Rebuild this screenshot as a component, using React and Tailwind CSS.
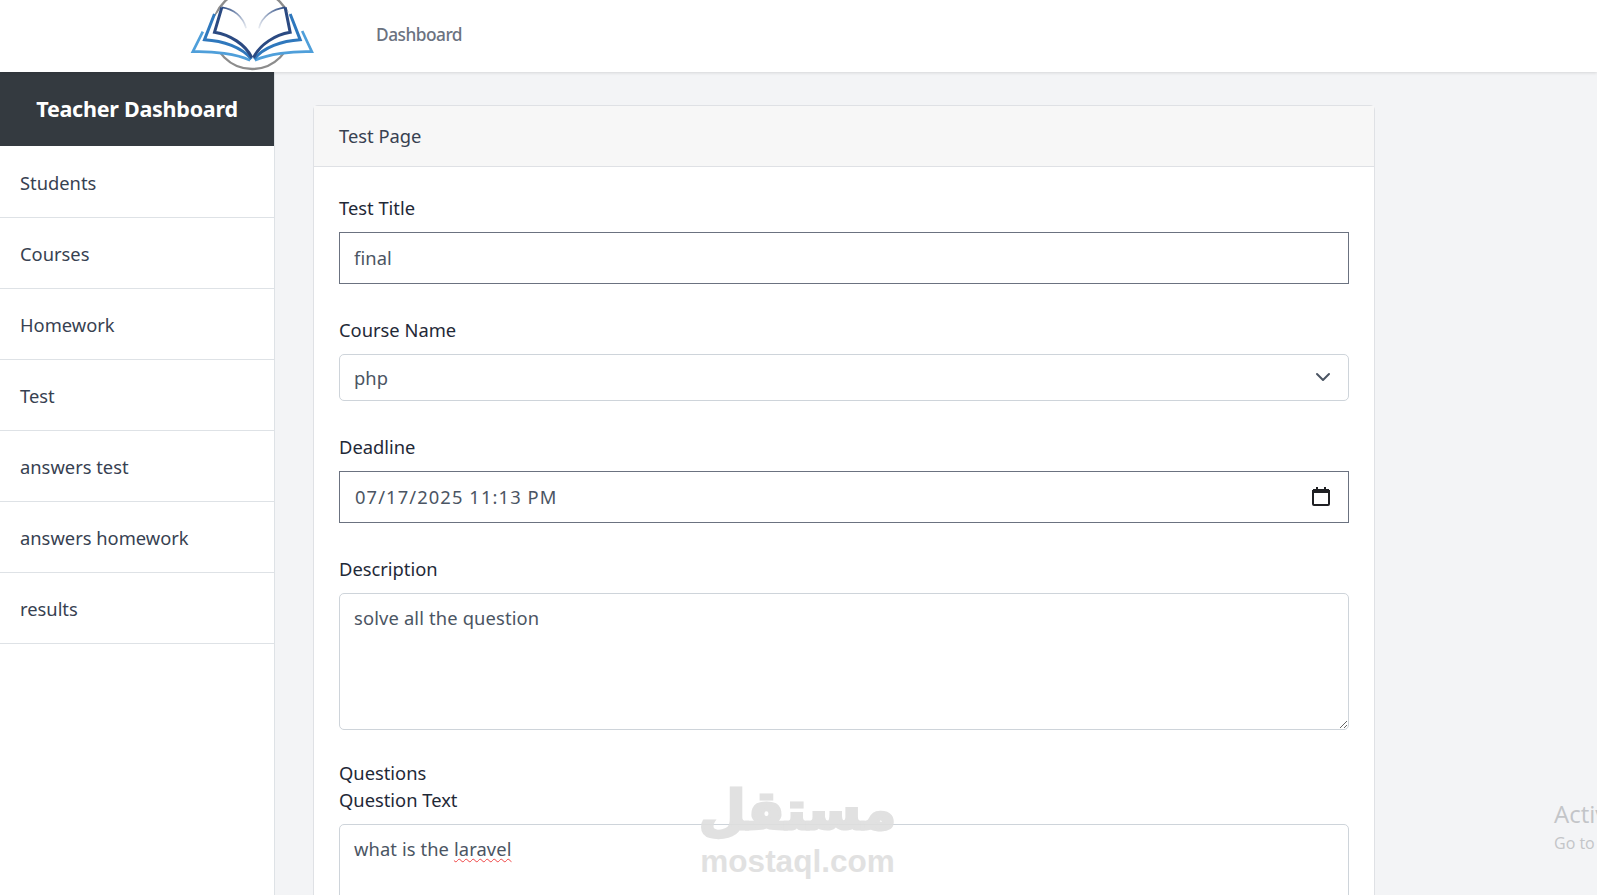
const items = ["Students", "Courses", "Homework", "Test", "answers test", "answers homework", "results"];

function Logo() {
  return (
    <svg viewBox="60 0 380 216" className="w-[127px] h-[72px] shrink-0 ml-[190px]" fill="none">
      <defs>
        <linearGradient id="fadeL" x1="155" y1="25" x2="228" y2="88" gradientUnits="userSpaceOnUse">
          <stop offset="0" stopColor="#2b4a82" />
          <stop offset="1" stopColor="#2b4a82" stopOpacity="0.1" />
        </linearGradient>
        <linearGradient id="fadeR" x1="345" y1="25" x2="266" y2="88" gradientUnits="userSpaceOnUse">
          <stop offset="0" stopColor="#2b4a82" />
          <stop offset="1" stopColor="#2b4a82" stopOpacity="0.1" />
        </linearGradient>
      </defs>
      <circle cx="246" cy="92" r="118" stroke="#8c8c8c" strokeWidth="7" />
      <path d="M98 98 L68 158 C130 160 200 165 240 186 L256 186 C300 165 370 160 426 158 L396 98 L345 25 C308 30 275 52 247 100 C218 52 190 30 155 25 Z" fill="#fff" />
      <path d="M98 98 L68 158 C130 156 200 165 240 184" stroke="#4f9fda" strokeWidth="8" />
      <path d="M396 96 L425 158 C365 156 295 165 254 184" stroke="#4f9fda" strokeWidth="8" />
      <path d="M133 45 L103 122 C160 125 215 145 244 180" stroke="#2f78bd" strokeWidth="9" />
      <path d="M360 45 L390 122 C335 125 280 145 252 180" stroke="#2f78bd" strokeWidth="9" />
      <path d="M155 25 L133 100 C180 108 225 135 245 176" stroke="#2b4a82" strokeWidth="9" />
      <path d="M345 25 L360 100 C315 108 270 135 250 176" stroke="#2b4a82" strokeWidth="9" />
      <path d="M155 25 C190 30 218 52 228 88" stroke="url(#fadeL)" strokeWidth="5" />
      <path d="M345 25 C308 30 275 52 266 88" stroke="url(#fadeR)" strokeWidth="5" />
    </svg>
  );
}

function Label({ children, className = "" }) {
  return <div className={"text-[#1f2937] leading-[27.5px] " + className}>{children}</div>;
}

export default function App() {
  return (
    <div className="relative h-[895px] w-[1597px] overflow-hidden bg-[#f3f4f6] text-[18.33px] text-[#374151] font-['Noto_Sans','Open_Sans',sans-serif]">
      <header className="relative z-10 flex h-[72px] items-center bg-white pb-[3px] shadow-[0_1px_3px_rgba(0,0,0,0.12)]">
        <Logo />
        <span className="ml-[59px] text-[17.3px] font-medium tracking-[-0.5px] text-[#6b7280]">Dashboard</span>
      </header>
      <div className="flex h-[823px]">
        <aside className="w-[275px] shrink-0 border-r border-[#dee2e6] bg-white">
          <div className="flex h-[74px] items-center justify-center bg-[#343a40] text-[21.5px] font-bold tracking-[-0.25px] text-white">
            Teacher Dashboard
          </div>
          <ul className="pt-px">
            {items.map((t) => (
              <li key={t} className="flex h-[71px] items-center border-b border-[#dee2e6] pl-5 pt-[2px] text-[#374151]">
                {t}
              </li>
            ))}
          </ul>
        </aside>
        <main className="min-w-0 flex-1 pl-[38px] pt-[33px]">
          <section className="w-[1062px] rounded-t-[5px] border border-b-0 border-[#dfe1e5] bg-white pb-10">
            <div className="flex h-[61px] items-center border-b border-[#dfe1e5] bg-[#f7f7f7] pl-[25px]">Test Page</div>
            <form className="px-[25px] pt-[27px]">
              <Label className="mb-[10px]">Test Title</Label>
              <input
                readOnly
                value="final"
                className="mb-[32px] block h-[52px] w-full border border-[#6b7280] bg-white px-[14px] tracking-[0.1px] text-[#4b5563] outline-none"
              />
              <Label className="mb-[11px]">Course Name</Label>
              <div className="relative mb-[32px]">
                <select className="block h-[47px] w-full appearance-none rounded-[5px] border border-[#ced4da] bg-white px-[14px] tracking-[0.1px] text-[#4b5563] outline-none">
                  <option>php</option>
                </select>
                <svg className="pointer-events-none absolute right-[18px] top-[16px] h-[14px] w-[16px]" viewBox="0 0 16 14" fill="none">
                  <path d="M2 4 L8 10 L14 4" stroke="#4b5563" strokeWidth="2" strokeLinecap="round" strokeLinejoin="round" />
                </svg>
              </div>
              <Label className="mb-[10px]">Deadline</Label>
              <div className="relative mb-[32px]">
                <input
                  readOnly
                  value="07/17/2025 11:13 PM"
                  className="block h-[52px] w-full border border-[#6b7280] bg-white px-[15px] tracking-[1.1px] text-[#4b5563] outline-none"
                />
                <svg className="pointer-events-none absolute right-[19px] top-[15px] h-[20px] w-[18px]" viewBox="0 0 18 20" fill="none">
                  <path d="M1 5 H17 V18 a1 1 0 0 1 -1 1 H2 a1 1 0 0 1 -1 -1 Z" stroke="#1f2023" strokeWidth="2" />
                  <path d="M1 3 H17 V7 H1 Z" fill="#1f2023" />
                  <path d="M5 1 V4 M13 1 V4" stroke="#1f2023" strokeWidth="2" />
                </svg>
              </div>
              <Label className="mb-[11px]">Description</Label>
              <textarea
                readOnly
                spellCheck={false}
                value="solve all the question"
                className="mb-[29px] block h-[137px] w-full rounded-[5px] border border-[#ced4da] bg-white px-[14px] py-[10px] tracking-[0.15px] text-[#4b5563] outline-none"
              />
              <Label className="-mb-px">Questions</Label>
              <Label className="mb-[11px]">Question Text</Label>
              <div className="relative">
                <textarea
                  readOnly
                  spellCheck={false}
                  value="what is the laravel"
                  className="block h-[137px] w-full rounded-[5px] border border-[#ced4da] bg-white px-[14px] py-[10px] tracking-[0.1px] text-[#4b5563] outline-none"
                />
                <span className="pointer-events-none absolute left-[15px] top-[11px] whitespace-pre leading-[27.5px] tracking-[0.1px] text-transparent">
                  what is the <span className="underline decoration-[#ef4444] decoration-wavy decoration-1 underline-offset-2">laravel</span>
                </span>
              </div>
            </form>
          </section>
        </main>
      </div>

      <div className="pointer-events-none absolute left-[701px] top-[776px] z-20 flex w-[193px] flex-col items-center text-[#dedede] opacity-90">
        <span className="font-['DejaVu_Sans',sans-serif] text-[54px] font-bold leading-[70px] [-webkit-text-stroke:3px_#dedede]">مستقل</span>
        <span className="whitespace-nowrap font-['Liberation_Sans',sans-serif] text-[31.5px] font-bold leading-[30px]">mostaql.com</span>
      </div>

      <div className="pointer-events-none absolute left-[1554px] top-[798px] z-20 whitespace-nowrap font-['Open_Sans',sans-serif] text-[#c3c5c8]">
        <div className="text-[24px] leading-[32px]">Activate Windows</div>
        <div className="text-[16px] leading-[26px]">Go to Settings to activate Windows.</div>
      </div>
    </div>
  );
}
